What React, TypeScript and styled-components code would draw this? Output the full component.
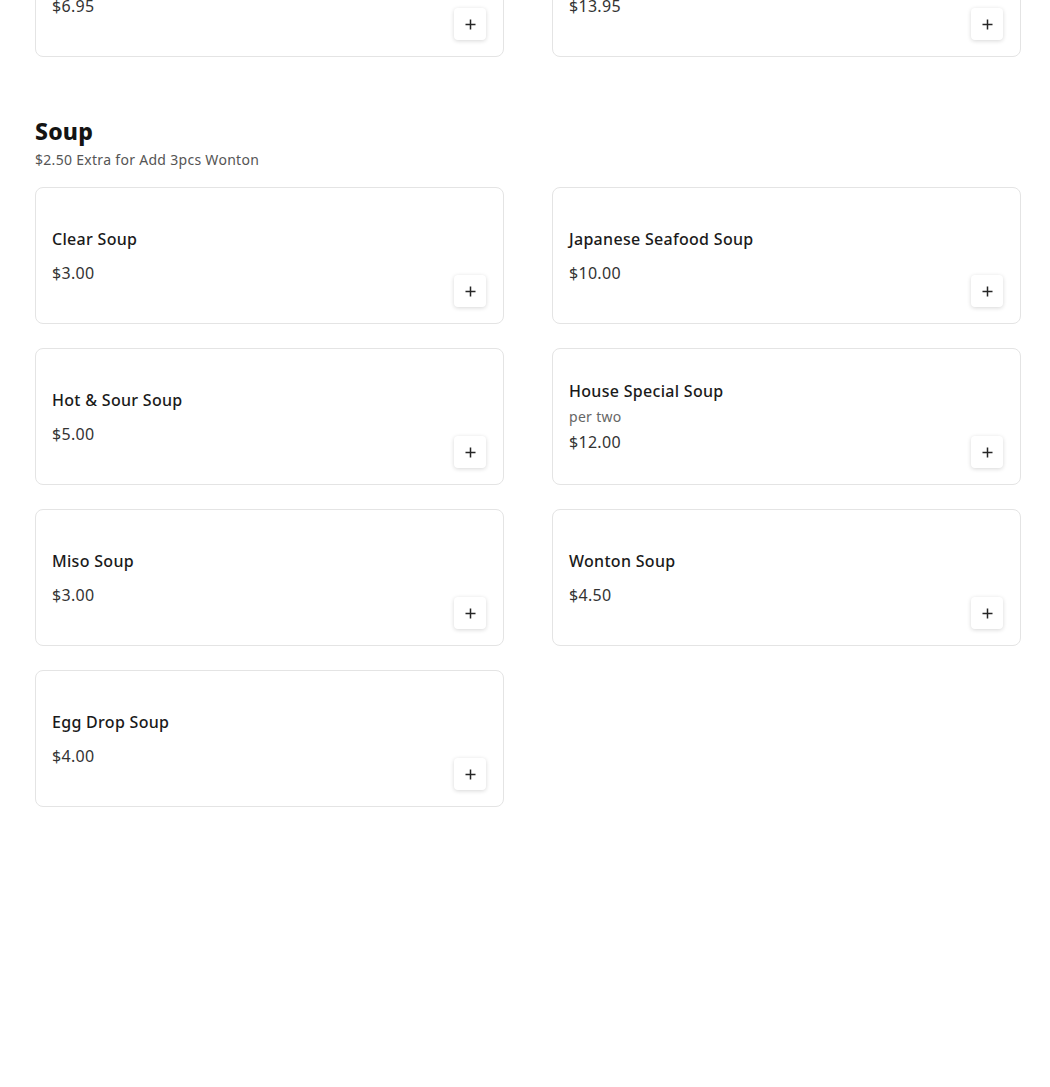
import React from 'react'
import styled, { createGlobalStyle } from 'styled-components';


/* Global */
const GlobalStyle = createGlobalStyle`
    body {
        margin: 0;
        background: #ffffff;
        font-family: "Noto Sans", "Open Sans", Arial, sans-serif;
        color: #1f1f1f;
    }
`;


/* Data */
type Item = { name: string; price: string; note?: string };

const previousRow: Item[] = [
    { name: 'Spring Roll', price: '$6.95' },
    { name: 'Gyoza', price: '$13.95' },
];

const soups: Item[] = [
    { name: 'Clear Soup', price: '$3.00' },
    { name: 'Japanese Seafood Soup', price: '$10.00' },
    { name: 'Hot & Sour Soup', price: '$5.00' },
    { name: 'House Special Soup', price: '$12.00', note: 'per two' },
    { name: 'Miso Soup', price: '$3.00' },
    { name: 'Wonton Soup', price: '$4.50' },
    { name: 'Egg Drop Soup', price: '$4.00' },
];


/* Styled Components */
const Page = styled.div`
    padding: 0 29px 240px 35px;
    overflow: hidden;
`;

    const Section = styled.section<{ $cut?: boolean }>`
        margin-top: ${p => (p.$cut ? '-80px' : '60px')};
        display: flex;
        flex-flow: column nowrap;
    `;

        const SectionTitle = styled.h2`
            margin: 0;
            font-size: 23px;
            line-height: 29px;
            font-weight: 800;
            letter-spacing: 0.2px;
            color: #141414;
        `;

        const SectionNote = styled.div`
            margin-top: 4px;
            font-size: 14px;
            line-height: 20px;
            letter-spacing: 0.3px;
            color: #555555;
        `;

        const Grid = styled.div<{ $top: number }>`
            margin-top: ${p => p.$top}px;
            display: grid;
            grid-template-columns: 1fr 1fr;
            column-gap: 48px;
            row-gap: 24px;
        `;

            const Card = styled.div`
                box-sizing: border-box;
                height: 137px;
                padding: 0 17px 16px 16px;

                border: 1px solid #e4e4e4;
                border-radius: 8px;
                background: #ffffff;

                display: flex;
                flex-flow: row nowrap;
                align-items: center;
                justify-content: space-between;
            `;

                const Info = styled.div`
                    padding-top: 16px;
                    display: flex;
                    flex-flow: column nowrap;
                `;

                    const Name = styled.div`
                        font-size: 16px;
                        line-height: 22px;
                        font-weight: 500;
                        letter-spacing: 0.3px;
                        color: #1a1a1a;
                    `;

                    const Note = styled.div`
                        margin-top: 5px;
                        font-size: 14px;
                        line-height: 20px;
                        letter-spacing: 0.3px;
                        color: #666666;
                    `;

                    const Price = styled.div<{ $noted?: boolean }>`
                        margin-top: ${p => (p.$noted ? '4px' : '12px')};
                        font-size: 16px;
                        line-height: 22px;
                        letter-spacing: 0.3px;
                        color: #333333;
                    `;

                const AddButton = styled.button`
                    align-self: flex-end;
                    width: 32px;
                    height: 32px;
                    padding: 0;

                    border: none;
                    border-radius: 4px;
                    background: #ffffff;
                    box-shadow: 0 1px 4px rgba(0, 0, 0, 0.16);

                    cursor: pointer;

                    display: flex;
                    align-items: center;
                    justify-content: center;
                `;


/* React Components */
function PlusIcon () {
    return (
        <svg width="11" height="11" viewBox="0 0 11 11" fill="none">
            <path d="M5.5 0.5v10M0.5 5.5h10" stroke="#262626" strokeWidth="1.5" />
        </svg>
    )
}

function MenuCard ({ item }: { item: Item }) {
    return (
        <Card>
            <Info>
                <Name>{item.name}</Name>
                {item.note && <Note>{item.note}</Note>}
                <Price $noted={!!item.note}>{item.price}</Price>
            </Info>
            <AddButton aria-label={`Add ${item.name}`}>
                <PlusIcon />
            </AddButton>
        </Card>
    )
}

function App () {
    return (
        <Page>
            <GlobalStyle />

            <Section $cut>
                <Grid $top={0}>
                    {previousRow.map(item => <MenuCard key={item.name} item={item} />)}
                </Grid>
            </Section>

            <Section>
                <SectionTitle>Soup</SectionTitle>
                <SectionNote>$2.50 Extra for Add 3pcs Wonton</SectionNote>
                <Grid $top={17}>
                    {soups.map(item => <MenuCard key={item.name} item={item} />)}
                </Grid>
            </Section>
        </Page>
    )
}


export default App;
